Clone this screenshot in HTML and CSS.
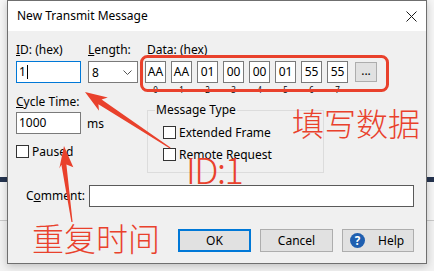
FILE: index.html
```html
<!DOCTYPE html>
<html lang="en">

<head>
    <meta charset="UTF-8">
    <title>New Transmit Message</title>
    <link rel="stylesheet" href="styles.css">
</head>

<body>

    <div class="dialog">
        <div class="titlebar">
            <span class="titlebar__text">New Transmit Message</span>
            <svg class="titlebar__close" width="11" height="11" viewBox="0 0 11 11">
                <path d="M0.5 0.5 L10.5 10.5 M10.5 0.5 L0.5 10.5" stroke="#1a1a1a" stroke-width="1" fill="none" />
            </svg>
        </div>

        <div class="dialog__body">
            <div class="row-top">
                <div class="field field--id">
                    <div class="label"><u>I</u>D: (hex)</div>
                    <div class="edit edit--focus">1<span class="caret"></span></div>
                </div>
                <div class="field field--len">
                    <div class="label"><u>L</u>ength:</div>
                    <div class="combo">
                        <span>8</span>
                        <svg width="9" height="5" viewBox="0 0 9 5">
                            <path d="M0.5 0.5 L4.5 4.5 L8.5 0.5" stroke="#555" fill="none" />
                        </svg>
                    </div>
                </div>
                <div class="field field--data">
                    <div class="label label--data"><u>D</u>ata: (hex)</div>
                    <div class="bytes">
                        <div class="byte"><div class="byte__box">AA</div><div class="byte__idx">0</div></div>
                        <div class="byte"><div class="byte__box">AA</div><div class="byte__idx">1</div></div>
                        <div class="byte"><div class="byte__box">01</div><div class="byte__idx">2</div></div>
                        <div class="byte"><div class="byte__box">00</div><div class="byte__idx">3</div></div>
                        <div class="byte"><div class="byte__box">00</div><div class="byte__idx">4</div></div>
                        <div class="byte"><div class="byte__box">01</div><div class="byte__idx">5</div></div>
                        <div class="byte"><div class="byte__box">55</div><div class="byte__idx">6</div></div>
                        <div class="byte"><div class="byte__box">55</div><div class="byte__idx">7</div></div>
                        <div class="more">...</div>
                    </div>
                </div>
            </div>

            <div class="row-mid">
                <div class="col-cycle">
                    <div class="label"><u>C</u>ycle Time:</div>
                    <div class="cycle-line">
                        <div class="edit">1000</div>
                        <span class="unit">ms</span>
                    </div>
                    <div class="check check--pause"><span class="check__box"></span>Paused</div>
                </div>
                <div class="group">
                    <div class="group__title">Message Type</div>
                    <div class="check check--ext"><span class="check__box"></span>Extended Frame</div>
                    <div class="check check--rtr"><span class="check__box"></span>Remote Request</div>
                </div>
            </div>

            <div class="row-comment">
                <div class="label label--comment">C<u>o</u>mment:</div>
                <div class="edit edit--wide"></div>
            </div>

            <div class="row-buttons">
                <div class="btn btn--default">OK</div>
                <div class="btn">Cancel</div>
                <div class="btn btn--help">
                    <svg width="15" height="15" viewBox="0 0 15 15">
                        <circle cx="7.5" cy="7.5" r="7.5" fill="#1f5fb0" />
                        <text x="7.5" y="11.6" text-anchor="middle" font-family="Noto Sans, sans-serif" font-size="11.5" font-weight="bold" fill="#fff">?</text>
                    </svg>
                    <span>Help</span>
                </div>
            </div>
        </div>
    </div>

    <!-- red annotations drawn on top of the screenshot -->
    <svg class="marks" width="434" height="271" viewBox="0 0 434 271">
        <rect x="141.5" y="56.5" width="246" height="34" rx="6" ry="6" fill="none" stroke="#e9412c" stroke-width="3" />
        <polygon fill="#e9412c"
            points="85,92 107.8,97.4 101.6,99.6 170.5,147.6 169.9,148.6 98.4,104.2 99,110.8" />
        <polygon fill="#e9412c"
            points="64,146 73.3,167.2 66.4,164.6 72.6,221.9 71.4,222.1 61.4,164.8 59.3,168.6" />
    </svg>
    <div class="note note--data">填写数据</div>
    <div class="note note--id">ID:1</div>
    <div class="note note--cycle">重复时间</div>

</body>

</html>
```

FILE: styles.css
```css
body {
    margin: 0;
    width: 434px;
    height: 271px;
    overflow: hidden;
    position: relative;
    font-family: "Noto Sans", "Open Sans", sans-serif;
    font-size: 12px;
    color: #000;
    background: linear-gradient(to bottom,
            #f6f6f6 0 177px,
            #25344f 177px 182px,
            #f6f6f6 182px 220px,
            #c9c9c9 220px 221px,
            #f2f2f2 221px);
}

.dialog {
    position: absolute;
    left: 7px;
    top: 0;
    width: 420px;
    height: 264px;
    box-sizing: border-box;
    border: 1px solid #6f6f6f;
    background-color: #f0f0f0;
    box-shadow: 0 2px 8px rgba(0, 0, 0, .22);
}

.titlebar {
    display: flex;
    align-items: center;
    justify-content: space-between;
    height: 30px;
    padding-left: 9px;
    background-color: #fff;
}

.titlebar__text {
    line-height: 30px;
}

.titlebar__close {
    margin-right: 9px;
}

.dialog__body {
    padding: 11px 0 0 8px;
}

.label {
    height: 16px;
    line-height: 16px;
    white-space: nowrap;
}

.edit {
    box-sizing: border-box;
    height: 22px;
    line-height: 20px;
    padding-left: 2px;
    background-color: #fff;
    border: 1px solid #7a7a7a;
}

.edit--focus {
    border-color: #0078d7;
}

.caret {
    display: inline-block;
    width: 1px;
    height: 14px;
    margin-left: 1px;
    vertical-align: -3px;
    background-color: #000;
}

/* first row: id, length, data bytes */

.row-top {
    display: flex;
    height: 52px;
}

.field .edit,
.field .combo,
.bytes {
    margin-top: 3px;
}

.field--id {
    width: 65px;
}

.field--len {
    width: 50px;
    margin-left: 7px;
}

.field--data {
    margin-left: 7px;
}

.label--data {
    padding-left: 2px;
}

.combo {
    box-sizing: border-box;
    display: flex;
    align-items: center;
    justify-content: space-between;
    height: 22px;
    padding: 0 5px 0 3px;
    background-color: #fff;
    border: 1px solid #7a7a7a;
}

.bytes {
    display: flex;
    align-items: flex-start;
}

.byte {
    width: 21px;
    margin-right: 5px;
}

.byte__box {
    box-sizing: border-box;
    height: 22px;
    line-height: 20px;
    text-align: center;
    background-color: #fff;
    border: 1px solid #7a7a7a;
}

.byte__idx {
    margin-top: 2px;
    font-size: 8px;
    line-height: 10px;
    text-align: center;
}

.more {
    box-sizing: border-box;
    width: 22px;
    height: 20px;
    margin: 1px 0 0 2px;
    line-height: 16px;
    text-align: center;
    background-color: #e1e1e1;
    border: 1px solid #adadad;
}

/* second row: cycle time, message type */

.row-mid {
    display: flex;
    align-items: flex-start;
}

.col-cycle {
    width: 131px;
}

.cycle-line {
    display: flex;
    align-items: center;
    margin-top: 2px;
}

.cycle-line .edit {
    width: 65px;
}

.unit {
    margin-left: 6px;
}

.check {
    display: flex;
    align-items: center;
    height: 13px;
    line-height: 13px;
    white-space: nowrap;
}

.check__box {
    box-sizing: border-box;
    width: 13px;
    height: 13px;
    margin-right: 3px;
    background-color: #fff;
    border: 1px solid #333;
}

.check--pause {
    margin-top: 11px;
}

.group {
    box-sizing: border-box;
    width: 177px;
    height: 63px;
    margin-top: 16px;
    padding-left: 15px;
    border: 1px solid #dcdcdc;
}

.group__title {
    width: fit-content;
    height: 16px;
    margin: -9px 0 0 -8px;
    padding: 0 1px;
    line-height: 16px;
    background-color: #f0f0f0;
}

.check--ext {
    margin-top: 8px;
}

.check--rtr {
    margin-top: 9px;
}

/* comment + buttons */

.row-comment {
    display: flex;
    margin-top: 12px;
}

.label--comment {
    width: 69px;
    padding-right: 4px;
    height: 22px;
    line-height: 22px;
    text-align: right;
}

.edit--wide {
    width: 325px;
    border-color: #5a5a5a;
}

.row-buttons {
    display: flex;
    justify-content: flex-end;
    gap: 9px;
    margin-top: 22px;
    padding-right: 12px;
}

.btn {
    box-sizing: border-box;
    display: flex;
    align-items: center;
    justify-content: center;
    width: 73px;
    height: 23px;
    background-color: #e1e1e1;
    border: 1px solid #adadad;
}

.btn--default {
    border: 2px solid #0078d7;
}

.btn--help {
    width: 72px;
    justify-content: flex-start;
    padding-left: 7px;
}

.btn--help span {
    margin-left: 13px;
}

/* annotations */

.marks {
    position: absolute;
    left: 0;
    top: 0;
}

.note {
    position: absolute;
    color: #e9412c;
    font-family: "Noto Sans CJK SC", sans-serif;
    font-weight: 300;
    line-height: 1;
    white-space: nowrap;
}

.note--data {
    left: 292px;
    top: 106px;
    font-size: 32px;
}

.note--cycle {
    left: 32px;
    top: 221px;
    font-size: 32px;
}

.note--id {
    left: 186px;
    top: 150px;
    font-size: 36px;
    letter-spacing: -1.5px;
}
```
